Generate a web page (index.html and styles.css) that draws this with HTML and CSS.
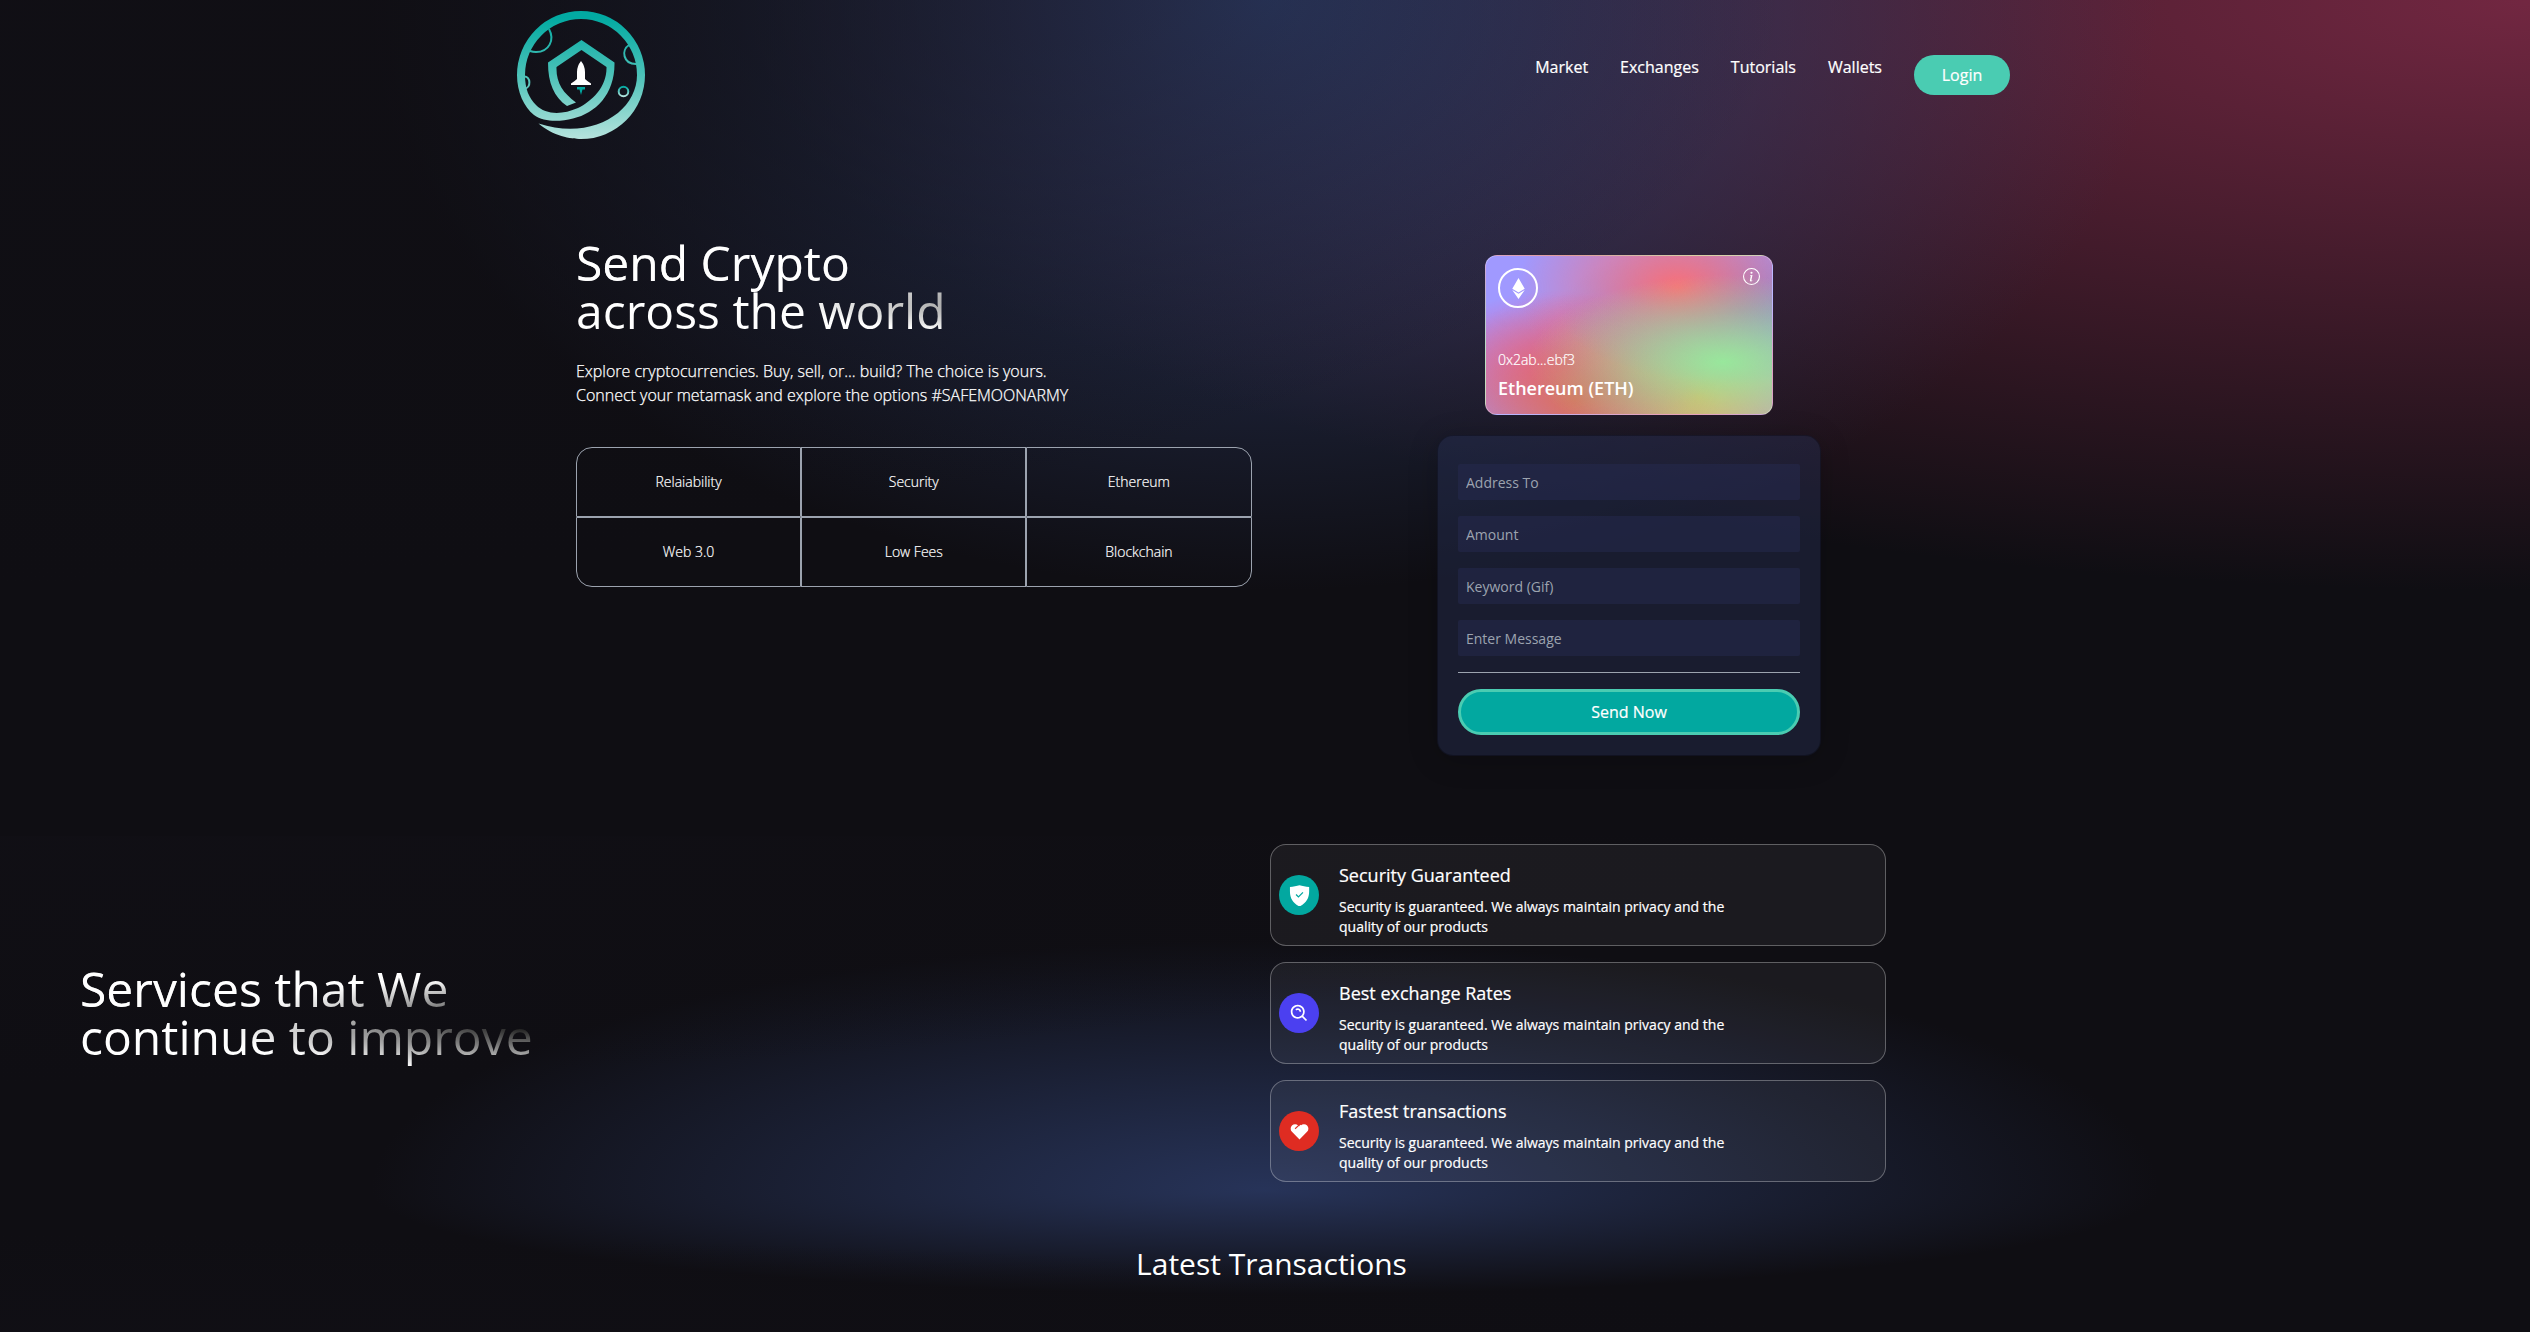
FILE: index.html
```html
<!DOCTYPE html>
<html lang="en">
<head>
<meta charset="utf-8">
<title>Send Crypto</title>
<link rel="stylesheet" href="styles.css">
</head>
<body>
<div class="welcome-bg">
  <nav class="navbar">
    <svg class="logo" viewBox="0 0 128 128" fill="none">
      <defs>
        <linearGradient id="moon" gradientUnits="userSpaceOnUse" x1="0" y1="0" x2="0" y2="128">
          <stop offset="0.05" stop-color="#02aaa2"/><stop offset="0.5" stop-color="#4cc2b8"/><stop offset="1" stop-color="#b6e3dd"/>
        </linearGradient>
        <linearGradient id="ring" x1="0" y1="0" x2="0" y2="1">
          <stop offset="0" stop-color="#02aaa2"/><stop offset="1" stop-color="#b6e3dd"/>
        </linearGradient>
      </defs>
      <path fill="url(#moon)" d="M21.500 112.500 C36 125 54 128 64 128 A64 64 0 1 0 0 64 C0 81 7 96 17 104 C27 111 42 111 56 107.500 C79 102 98 83 97.500 51.500 L64.500 29 L31 51.500 C31 72 37 86 50 95 L59 91.500 C46 82 39 72 39.500 56 L64.500 39 L89.500 56 C90 76 75 90 61 97 C45 104 29 104 19 94 C12 87 8 78 8 64 A56 56 0 1 1 120 64 C120 101 75 130 21.500 112.500Z"/>
      <g stroke="url(#moon)" stroke-width="2">
        <path d="M32 18 C38 29 32 41 19 41 Q16 41 13 40"/>
        <path d="M112 34 C104 39 106 53 119 53"/>
        <path d="M7 65.500 C14 65 14 77 8 77.500"/>
      </g>
      <circle cx="106.500" cy="80.500" r="4.800" stroke="url(#ring)" stroke-width="2"/>
      <path fill="#fff" d="M64 50 Q68 55 68 61 V68 Q70 70 74 72.500 V74 H54 V72.500 Q58 70 60 68 V61 Q60 55 64 50Z"/>
      <path fill="#02a8a0" d="M60 76 H68 V78.500 H65.500 L64 84 L62.500 78.500 H60Z"/>
    </svg>
    <ul class="nav-links">
      <li>Market</li><li>Exchanges</li><li>Tutorials</li><li>Wallets</li>
      <li class="login">Login</li>
    </ul>
  </nav>
  <main class="hero">
    <section class="intro">
      <h1 class="headline text-gradient">Send Crypto<br>across the world</h1>
      <p class="lead">Explore cryptocurrencies. Buy, sell, or... build? The choice is yours.<br>Connect your metamask and explore the options #SAFEMOONARMY</p>
      <div class="features">
        <div>Relaiability</div><div>Security</div><div>Ethereum</div>
        <div>Web 3.0</div><div>Low Fees</div><div>Blockchain</div>
      </div>
    </section>
    <section class="send">
      <div class="eth-card">
        <div class="eth-top">
          <span class="eth-badge">
            <svg width="21" height="21" viewBox="0 0 320 512" fill="#fff"><path d="M311.900 260.800L160 353.600 8 260.800 160 0l151.900 260.800zM160 383.400L8 290.600 160 512l152-221.400-152 92.800z"/></svg>
          </span>
          <svg width="17" height="17" viewBox="0 0 16 16" fill="#fff"><path d="M8 15A7 7 0 1 1 8 1a7 7 0 0 1 0 14zm0 1A8 8 0 1 0 8 0a8 8 0 0 0 0 16z"/><path d="m8.930 6.588-2.290.287-.082.380.450.083c.294.070.352.176.288.469l-.738 3.468c-.194.897.105 1.319.808 1.319.545 0 1.178-.252 1.465-.598l.088-.416c-.200.176-.492.246-.686.246-.275 0-.375-.193-.304-.533L8.930 6.588zM9 4.500a1 1 0 1 1-2 0 1 1 0 0 1 2 0z"/></svg>
        </div>
        <div>
          <p class="eth-address">0x2ab...ebf3</p>
          <p class="eth-name">Ethereum (ETH)</p>
        </div>
      </div>
      <form class="send-form">
        <input placeholder="Address To">
        <input placeholder="Amount">
        <input placeholder="Keyword (Gif)">
        <input placeholder="Enter Message">
        <div class="rule"></div>
        <button type="button">Send Now</button>
      </form>
    </section>
  </main>
</div>
<section class="services">
  <h2 class="headline services-title text-gradient">Services that We<br>continue to improve</h2>
  <div class="service-list">
    <article class="service">
      <span class="service-icon teal"><svg width="21" height="21" viewBox="0 0 20 20"><path fill="#fff" d="M10 .3C7.500 1.200 4 1.600 .9 2V6C.9 13 4 17.500 10 20.500 16 17.500 19.200 13 19.200 6V2C16 1.600 12.500 1.200 10 .3Z"/><path d="M6.700 9l2.300 2.300 4.300-4.300" fill="none" stroke="#02a8a0" stroke-width="1.200"/></svg></span>
      <div><h3>Security Guaranteed</h3><p>Security is guaranteed. We always maintain privacy and the quality of our products</p></div>
    </article>
    <article class="service">
      <span class="service-icon indigo"><svg width="21" height="21" viewBox="0 0 24 24" fill="#fff"><path d="M10 18a7.952 7.952 0 0 0 4.897-1.688l4.396 4.396 1.414-1.414-4.396-4.396A7.952 7.952 0 0 0 18 10c0-4.411-3.589-8-8-8s-8 3.589-8 8 3.589 8 8 8zm0-14c3.309 0 6 2.691 6 6s-2.691 6-6 6-6-2.691-6-6 2.691-6 6-6z"/><path d="M11.412 8.586c.379.380.588.882.588 1.414h2a3.977 3.977 0 0 0-1.174-2.828c-1.514-1.512-4.139-1.512-5.652 0l1.412 1.416c.760-.758 2.070-.756 2.826-.002z"/></svg></span>
      <div><h3>Best exchange Rates</h3><p>Security is guaranteed. We always maintain privacy and the quality of our products</p></div>
    </article>
    <article class="service">
      <span class="service-icon red"><svg width="21" height="21" viewBox="0.500 1 19 19"><path fill="#fff" d="M3.172 5.172a4 4 0 0 1 5.656 0L10 6.343l1.172-1.171a4 4 0 1 1 5.656 5.656L10 17.657l-6.828-6.829a4 4 0 0 1 0-5.656z"/><path d="M10 6.500l1.500-1.500" stroke="#fff" stroke-width="2"/><path d="M6 8l4-3.800" stroke="#df2c22" stroke-width="1"/></svg></span>
      <div><h3>Fastest transactions</h3><p>Security is guaranteed. We always maintain privacy and the quality of our products</p></div>
    </article>
  </div>
</section>
<section class="transactions"><h2>Latest Transactions</h2></section>
</body>
</html>
```
FILE: styles.css
```css
* { box-sizing: border-box; margin: 0; padding: 0; }
html, body { height: 1332px; overflow: hidden; }
body { background: #0f0e13; color: #fff; font-family: "Open Sans", sans-serif; font-size: 16px; line-height: 24px; }
ul { list-style: none; }

.welcome-bg {
  height: 836px;
  background-color: #0f0e13;
  background-image:
    radial-gradient(at 0% 0%, hsla(253,16%,7%,1) 0, transparent 50%),
    radial-gradient(at 50% 0%, hsla(225,39%,30%,1) 0, transparent 50%),
    radial-gradient(at 100% 0%, hsla(339,49%,30%,1) 0, transparent 50%);
}
.navbar { height: 155px; display: flex; justify-content: space-between; align-items: flex-start; padding: 11px 520px 0 517px; }
.logo { width: 128px; height: 128px; }
.nav-links { display: flex; align-items: flex-start; gap: 32px; padding-top: 44px; font-weight: 500; -webkit-text-stroke: 0.2px #fff; }
.login { background: #4accb2; border-radius: 999px; padding: 8px 0; width: 96px; display: flex; justify-content: center; }

.hero { display: flex; justify-content: space-between; align-items: flex-start; padding: 80px 709px 0 576px; }
.intro { width: 675.5px; }
.headline { font-size: 48px; line-height: 48px; font-weight: 400; padding: 4px 0; }
.text-gradient {
  color: transparent;
  background-color: #fff;
  background-image:
    radial-gradient(at 4% 36%, #fff 0, transparent 53%),
    radial-gradient(at 100% 60%, #000 0, transparent 50%);
  -webkit-background-clip: text;
  background-clip: text;
}
.lead { margin-top: 20px; font-weight: 300; -webkit-text-stroke: 0.25px #fff; }
.features { margin-top: 40px; display: grid; grid-template-columns: repeat(3, 1fr); font-size: 14px; font-weight: 300; -webkit-text-stroke: 0.2px #fff; }
.features div { height: 70px; border: 1px solid #9ca3af; display: flex; align-items: center; justify-content: center; }
.features div:nth-child(1) { border-top-left-radius: 16px; }
.features div:nth-child(3) { border-top-right-radius: 16px; }
.features div:nth-child(4) { border-bottom-left-radius: 16px; }
.features div:nth-child(6) { border-bottom-right-radius: 16px; }

.send { width: 384px; display: flex; flex-direction: column; align-items: center; padding-top: 20px; gap: 20px; }
.eth-card {
  width: 288px; height: 160px; padding: 12px; border-radius: 12px;
  border: 1px solid rgba(255,255,255,0.3);
  display: flex; flex-direction: column; justify-content: space-between;
  background-color: #a099ff;
  background-image:
    radial-gradient(at 83% 67%, rgb(152,231,156) 0, transparent 58%),
    radial-gradient(at 67% 20%, hsla(357,94%,71%,1) 0, transparent 59%),
    radial-gradient(at 88% 35%, hsla(222,81%,65%,1) 0, transparent 50%),
    radial-gradient(at 31% 91%, hsla(9,61%,61%,1) 0, transparent 52%),
    radial-gradient(at 27% 71%, hsla(336,91%,65%,1) 0, transparent 49%),
    radial-gradient(at 74% 89%, hsla(30,98%,65%,1) 0, transparent 51%),
    radial-gradient(at 53% 75%, hsla(174,94%,68%,1) 0, transparent 45%);
}
.eth-top { display: flex; justify-content: space-between; align-items: flex-start; }
.eth-badge { width: 40px; height: 40px; border: 2px solid #fff; border-radius: 50%; display: flex; align-items: center; justify-content: center; }
.eth-address { font-size: 14px; line-height: 20px; font-weight: 300; -webkit-text-stroke: 0.2px #fff; }
.eth-name { font-size: 18px; line-height: 28px; font-weight: 600; margin-top: 4px; }

.send-form {
  width: 384px; padding: 20px; display: flex; flex-direction: column;
  background: rgba(39,51,89,0.4);
  border-radius: 16px;
  box-shadow: 0 4px 30px rgba(0,0,0,0.2);
  border: 1px solid rgba(0,0,0,0.3);
}
.send-form input {
  height: 36px; margin: 8px 0; padding: 8px; border: 0; border-radius: 2px; outline: none;
  font: 400 14px/20px "Open Sans", sans-serif; color: #fff;
  background: rgba(38,42,80,0.5);
}
.send-form input::placeholder { color: #9ca3af; }
.rule { height: 1px; margin: 8px 0; background: #9ca3af; }
.send-form button {
  margin-top: 8px; height: 46px; border: 3px solid #4accb2; border-radius: 999px;
  background: #02a8a0; color: #fff; font: 500 16px/24px "Open Sans", sans-serif;
  -webkit-text-stroke: 0.2px #fff;
}

.services {
  height: 354px; display: flex; justify-content: space-between; align-items: center; padding: 0 644px 0 80px;
  background-color: #0f0e13;
  background-image:
    radial-gradient(at 0% 0%, hsla(253,16%,7%,1) 0, transparent 50%),
    radial-gradient(at 50% 100%, hsla(225,39%,25%,1) 0, transparent 50%);
}
.services-title { width: 476px; padding: 8px 0; }
.service-list { width: 616px; display: flex; flex-direction: column; gap: 16px; }
.service {
  height: 102px; padding: 0 8px; display: flex; align-items: center;
  background: rgba(255,255,255,0.05); border: 1px solid rgba(255,255,255,0.3); border-radius: 16px;
}
.service-icon { width: 40px; height: 40px; border-radius: 50%; margin-right: 20px; display: flex; align-items: center; justify-content: center; }
.teal { background: #02a8a0; }
.indigo { background: #4b40f0; }
.red { background: #df2c22; }
.service h3 { font-size: 18px; line-height: 28px; font-weight: 400; margin-top: 8px; -webkit-text-stroke: 0.2px #fff; }
.service p { width: 400px; margin-top: 8px; font-size: 14px; line-height: 20px; font-weight: 500; -webkit-text-stroke: 0.2px #fff; }

.transactions {
  height: 148px; padding: 56px 0 0 13px; text-align: center;
  background-color: #0f0e13;
  background-image:
    radial-gradient(at 0% 100%, hsla(253,16%,7%,1) 0, transparent 50%),
    radial-gradient(at 50% 0%, hsla(225,39%,25%,1) 0, transparent 50%);
}
.transactions h2 { font-size: 30px; line-height: 36px; font-weight: 400; }
```
